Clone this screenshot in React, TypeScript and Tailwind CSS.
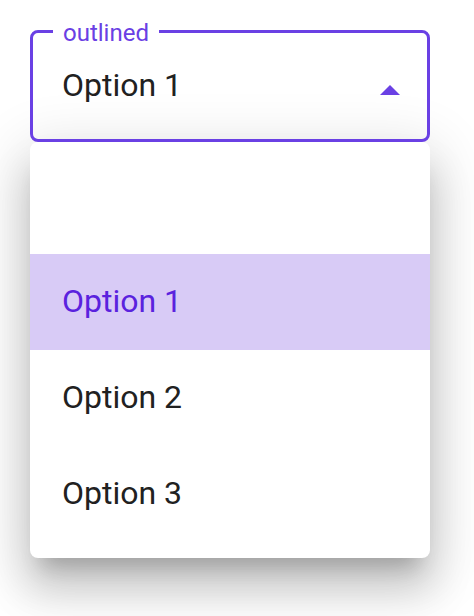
import React from "react";

export default function App() {
  const options = ["Option 1", "Option 2", "Option 3"];
  return (
    <div
      className="w-[474px] h-[616px] bg-white"
      style={{ fontFamily: "Roboto, 'Liberation Sans', sans-serif" }}
    >
      <div className="pt-[30px] pl-[30px] w-[430px]">
        <div className="relative h-[112px] w-[400px] rounded-[8px] border-[3px] border-[#6a40e4] flex items-center pl-[29px] pr-[27px] pb-[3px]">
          <span className="absolute left-[20px] top-[-12px] bg-white px-[10px] text-[24px] leading-[24px] text-[#6a40e4]">
            outlined
          </span>
          <span className="flex-1 text-[32px] leading-[38px] text-[#212121]">Option 1</span>
          <svg width="20" height="10" viewBox="0 0 20 10" className="mt-[11px]">
            <path d="M0 10 L10 0 L20 10 Z" fill="#6a40e4" />
          </svg>
        </div>
        <div className="w-[400px] rounded-[8px] bg-white py-[16px] shadow-[0_20px_20px_-12px_rgba(0,0,0,0.2),0_32px_40px_4px_rgba(0,0,0,0.14),0_12px_56px_10px_rgba(0,0,0,0.12)]">
          <div className="h-[96px]" />
          {options.map((o, i) => (
            <div
              key={o}
              className={
                "h-[96px] flex items-center px-[32px] pb-[3px] text-[32px] leading-[38px] " +
                (i === 0 ? "bg-[#d8cbf6] text-[#5a22de]" : "text-[#212121]")
              }
            >
              {o}
            </div>
          ))}
        </div>
      </div>
    </div>
  );
}
